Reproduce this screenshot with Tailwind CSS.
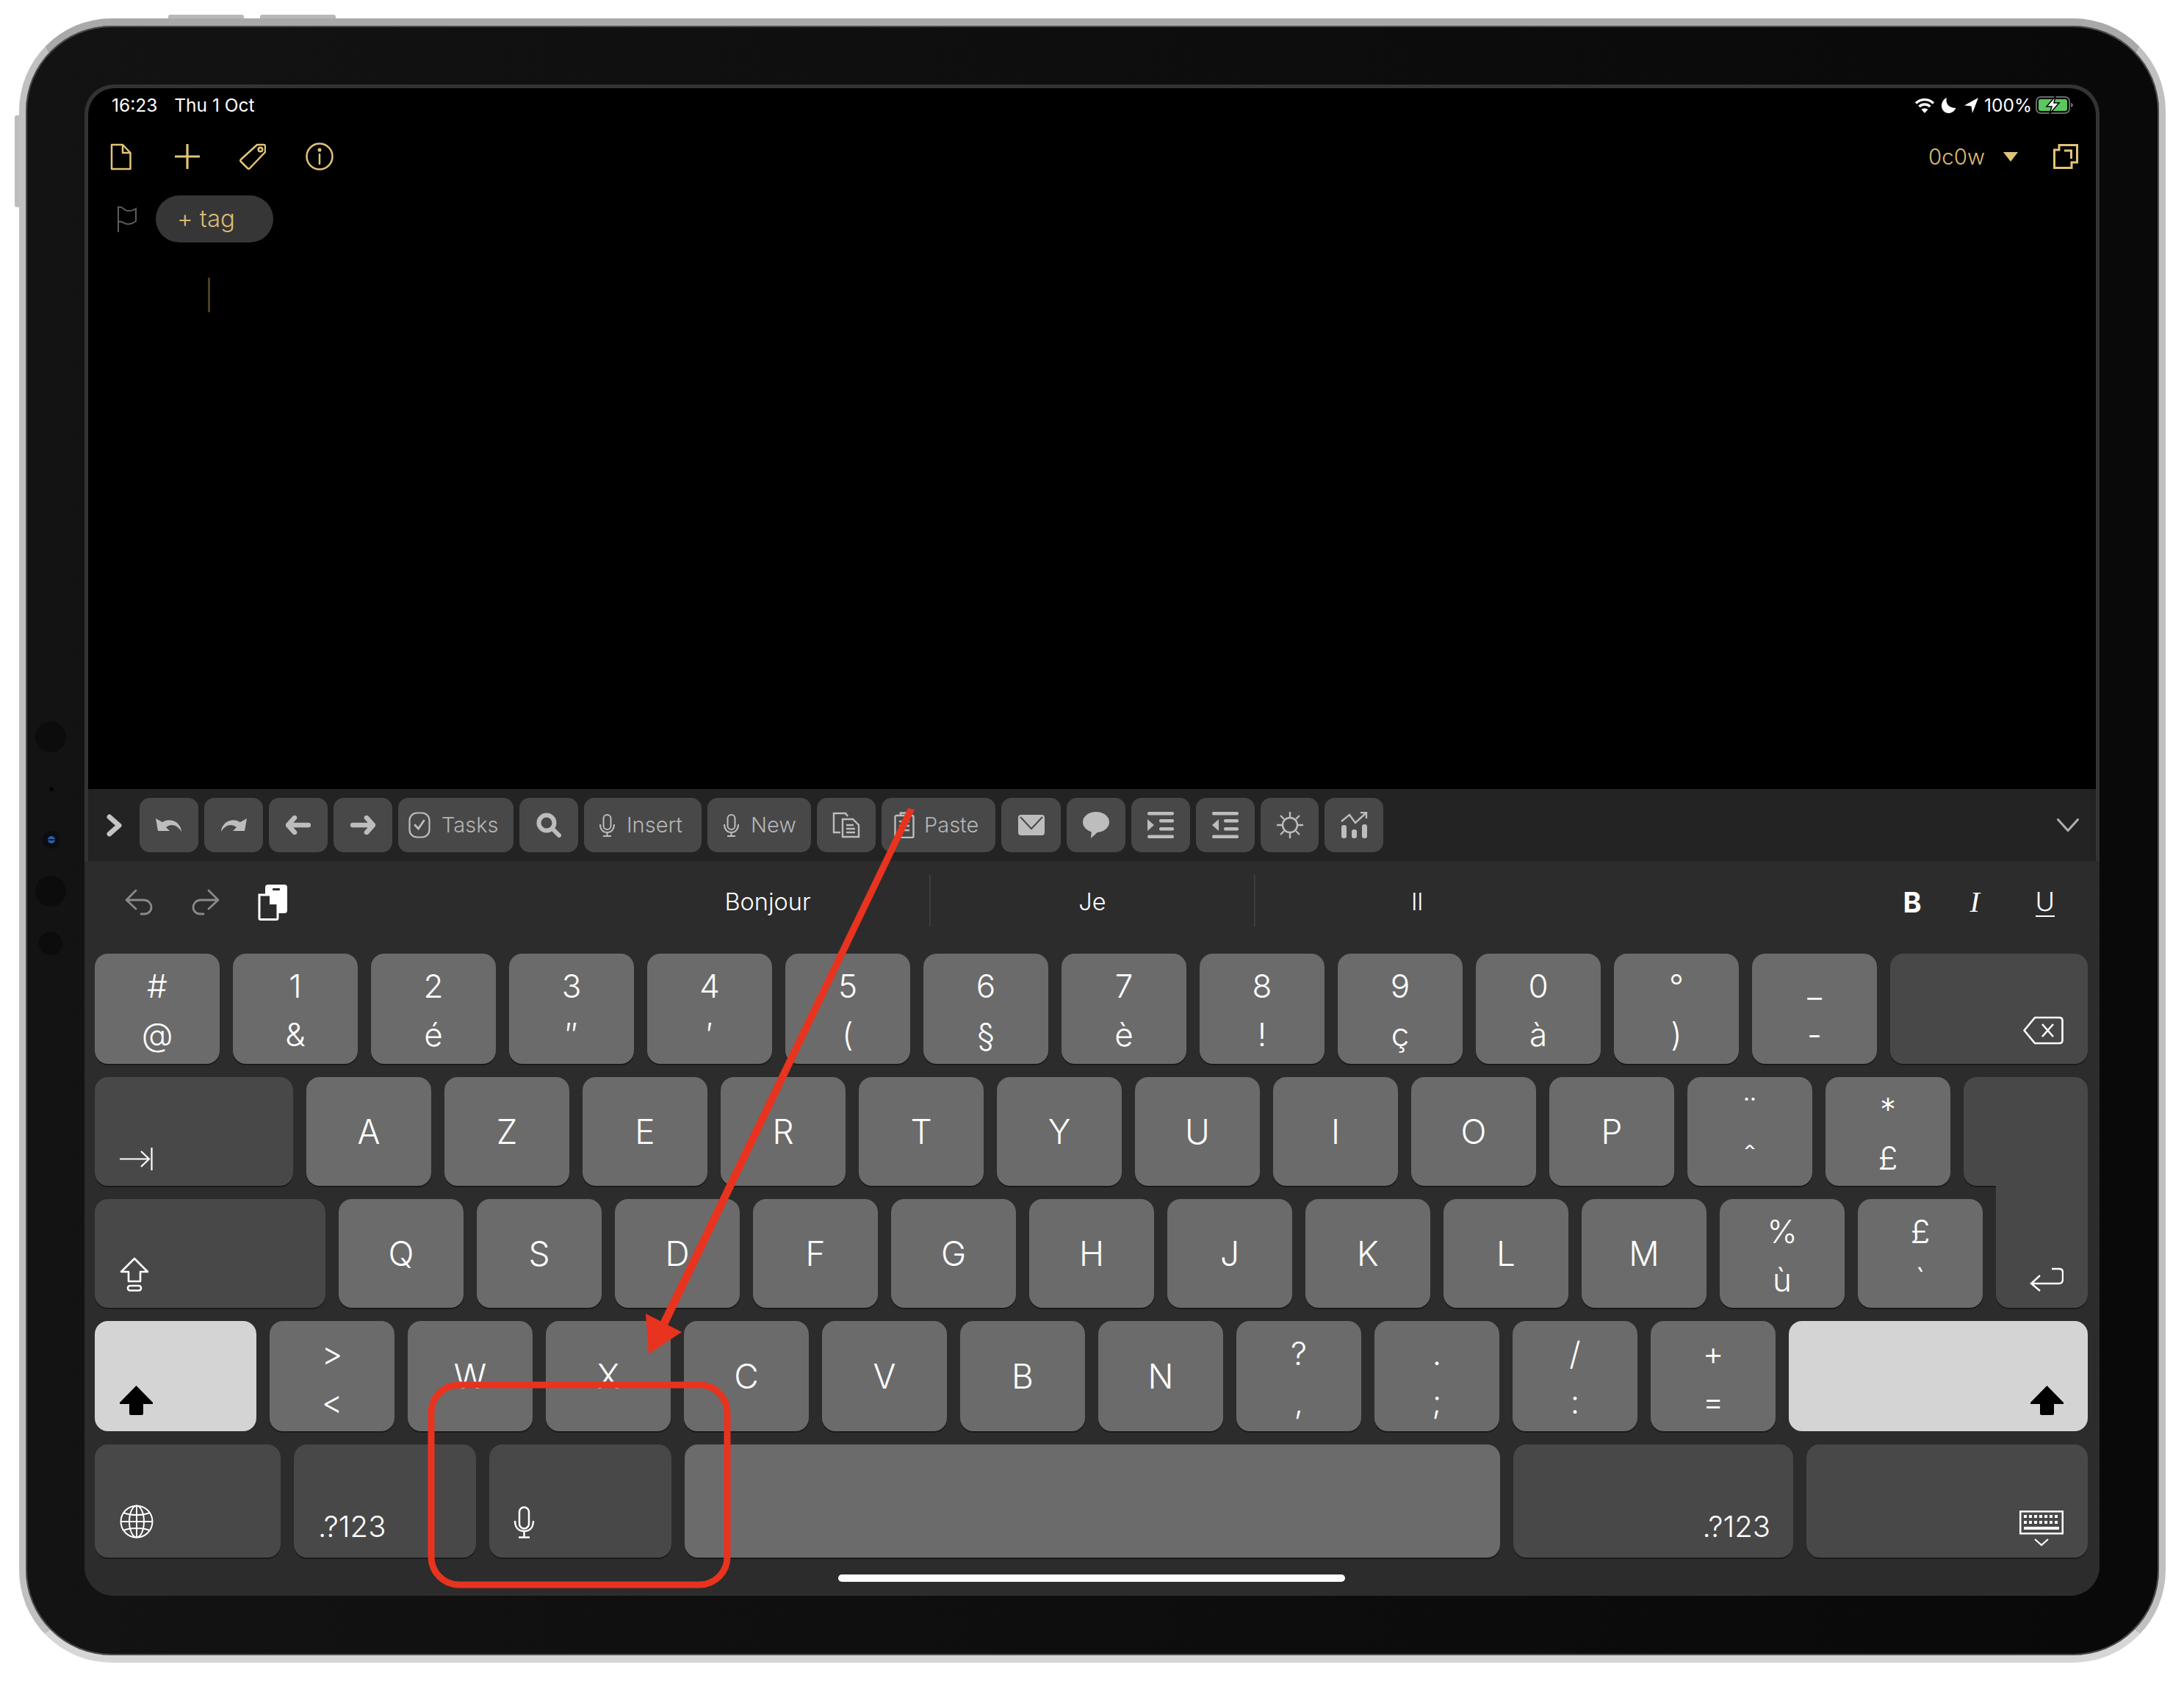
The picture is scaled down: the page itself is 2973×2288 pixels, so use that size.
<!DOCTYPE html>
<html lang="en">
<head>
  <meta charset="UTF-8" />
  <title>iPad keyboard</title>
  <script src="https://cdn.jsdelivr.net/npm/@tailwindcss/browser@4"></script>
</head>
<body class="bg-white font-['Inter',sans-serif] text-white">
<div class="relative w-[2973px] h-[2288px] overflow-hidden pt-[25px] pl-[26px]">

  <!-- DEVICE -->
  <div class="relative w-[2922px] h-[2238px] rounded-[126px] border-x-[9px] border-y-[10px] border-t-[#a9a9a9] border-x-[#c0c0c0] border-b-[#d6d6d6] bg-linear-to-r from-[#131313] to-[#090909] p-[80px] shadow-[inset_0_0_0_2px_#4a4a4a]">
    <!-- side buttons -->
    <div class="absolute left-[194px] -top-[15px] w-[103px] h-[5px] rounded-t-[3px] bg-[#b8b8b8]"></div>
    <div class="absolute left-[319px] -top-[15px] w-[103px] h-[5px] rounded-t-[3px] bg-[#b8b8b8]"></div>
    <div class="absolute -left-[15px] top-[122px] w-[6px] h-[125px] rounded-l-[3px] bg-[#bcbcbc]"></div>
    <!-- camera bar -->
    <div class="absolute left-[13px] top-[947px] w-[42px] h-[42px] rounded-full bg-[#0c0c0c]"></div>
    <div class="absolute left-[32px] top-[1036px] w-[6px] h-[6px] rounded-full bg-[#050505]"></div>
    <div class="absolute left-[23px] top-[1096px] w-[24px] h-[24px] rounded-full bg-[#0b0d12] p-[7px]"><div class="h-[10px] w-[10px] rounded-full border-y-[4px] border-[#2f5ea8] bg-[#101828]"></div></div>
    <div class="absolute left-[13px] top-[1157px] w-[42px] h-[42px] rounded-full bg-[#0c0c0c]"></div>
    <div class="absolute left-[18px] top-[1233px] w-[32px] h-[32px] rounded-full bg-[#0c0c0c]"></div>

    <!-- SCREEN -->
    <div class="w-[2743px] h-[2057px] rounded-[40px] overflow-hidden bg-[#333333] pt-[5px] flex flex-col">

      <!-- NOTE AREA -->
      <div class="mx-[5px] h-[954px] shrink-0 rounded-t-[36px] bg-black">
        <div class="flex h-[46px] items-center justify-between pl-[32px] pr-[30px] text-[24.500px]">
          <div class="flex gap-[23px]"><span>16:23</span><span>Thu 1 Oct</span></div>
          <div class="flex items-center">
            <svg class="w-[28px] h-[21px]" viewBox="0 0 28 21" fill="none" stroke="#fff" stroke-width="3.4"><path d="M2 7.500C9 1 19 1 26 7.500"/><path d="M6.500 12C11 8 17 8 21.500 12"/><path d="M14 21l-4.500-5c2.600-2 6.400-2 9 0z" fill="#fff" stroke="none"/></svg>
            <svg class="ml-[9px] w-[20px] h-[21px]" viewBox="0 0 20 21" fill="#fff"><path d="M7 0C5 7 9 14 19.500 14 17.500 18.500 13.500 21 9.500 21 4 21 0 16.500 0 11 0 6 3 1.500 7 0z"/></svg>
            <svg class="ml-[11px] w-[19px] h-[21px]" viewBox="0 0 19 21" fill="#fff"><path d="M19 0L11 21 9.500 11.500 0 10.500z"/></svg>
            <span class="ml-[8px]">100%</span>
            <svg class="ml-[5px] w-[52px] h-[26px]" viewBox="0 0 52 26" fill="none"><rect x="1" y="2" width="45" height="22" rx="6" stroke="#6a6a6a" stroke-width="2"/><rect x="4" y="5" width="39" height="16" rx="3" fill="#5ac85c"/><path d="M48 10c2 .5 3 2 3 3s-1 2.500-3 3z" fill="#6a6a6a"/><path d="M27 1L15 15h7l-3 10 13-15h-7z" fill="#fff" stroke="#000" stroke-width="1.500"/></svg>
          </div>
        </div>
        <div class="mt-[24px] flex h-[46px] items-center pl-[30px] pr-[24px]">
          <svg class="w-[29px] h-[37px]" viewBox="0 0 29 37" fill="none" stroke="#e2c477" stroke-width="2.500" stroke-linejoin="round"><path d="M2 2H17L27.500 13V35H2z"/><path d="M17 2V13H27.500"/></svg>
          <svg class="ml-[59px] w-[34px] h-[34px]" viewBox="0 0 34 34" fill="none" stroke="#e2c477" stroke-width="3.200" stroke-linecap="round"><path d="M17 1V33M1 17H33"/></svg>
          <svg class="ml-[54px] w-[36px] h-[36px]" viewBox="0 0 36 36" fill="none" stroke="#e2c477" stroke-width="2.500" stroke-linejoin="round"><path d="M24 2L33 2Q35 2 35 4L35 12L14 34Q12.500 35.500 11 34L2 25Q.5 23.500 2 22Z"/><circle cx="28.500" cy="8.500" r="2.800"/></svg>
          <svg class="ml-[54px] w-[38px] h-[38px]" viewBox="0 0 38 38" fill="none" stroke="#e2c477" stroke-width="2.500"><circle cx="19" cy="19" r="17.500"/><path d="M19 16V29" stroke-linecap="round"/><circle cx="19" cy="10" r="1.300" fill="#e2c477"/></svg>
          <span class="ml-auto text-[#dcbc70] text-[29.500px] font-light">0c0w</span>
          <svg class="ml-[25px] w-[20px] h-[13px]" viewBox="0 0 20 13" fill="#e2c477"><path d="M0 0H20L10 13z"/></svg>
          <svg class="ml-[48px] w-[34px] h-[34px]" viewBox="0 0 34 34" fill="none" stroke="#e2c477" stroke-width="3"><path d="M1.500 8H8V1.500H32.500V25H25V32.500H1.500z"/><path d="M15 9H24.500V20"/></svg>
        </div>
        <div class="mt-[30px] flex h-[64px] items-center pl-[39px]">
          <svg class="w-[27px] h-[38px]" viewBox="0 0 27 38" fill="none" stroke="#5c5c5c" stroke-width="2"><path d="M2 2V37M2 3C9 1 9 8 15 8 19 8 23 7 26 5V22C22 25 19 26 15 26 9 26 8 21 2 23"/></svg>
          <div class="ml-[26px] flex h-[64px] w-[160px] items-center rounded-full bg-[#363636] pl-[29px] text-[33px] font-light text-[#d8bc77]">+ tag</div>
        </div>
        <div class="ml-[163px] mt-[48px] h-[47px] w-[3px] bg-[#4a3f22]"></div>
      </div>

      <!-- SHORTCUT TOOLBAR -->
      <div class="mx-[5px] flex h-[98px] shrink-0 items-center gap-[8px] bg-[#232323] pl-[25px] text-[29px] font-light text-[#b4b4b4]">
        <svg class="mr-[16px] w-[21px] h-[31px]" viewBox="0 0 21 31" fill="none" stroke="#c4c4c4" stroke-width="7" stroke-linecap="round" stroke-linejoin="round"><path d="M4 4L17 15.500 4 27"/></svg>
        <div class="flex h-[74px] w-[80px] items-center justify-center rounded-[14px] bg-[#484848]"><svg class="w-[36px] h-[18px]" viewBox="0 0 36 18" fill="#bdbdbd"><path d="M0 0L3 17H19L14 12C21 6 30 9 35 18 35 9 24-3 9 5z"/></svg></div>
        <div class="flex h-[74px] w-[80px] items-center justify-center rounded-[14px] bg-[#484848]"><svg class="w-[36px] h-[18px]" viewBox="0 0 36 18" fill="#bdbdbd"><path d="M36 0L33 17H17L22 12C15 6 6 9 1 18 1 9 12-3 27 5z"/></svg></div>
        <div class="flex h-[74px] w-[80px] items-center justify-center rounded-[14px] bg-[#484848]"><svg class="w-[34px] h-[26px]" viewBox="0 0 34 26" fill="none" stroke="#bdbdbd" stroke-width="6.500" stroke-linecap="round" stroke-linejoin="round"><path d="M12 3L3 13 12 23M4 13H31"/></svg></div>
        <div class="flex h-[74px] w-[80px] items-center justify-center rounded-[14px] bg-[#484848]"><svg class="w-[34px] h-[26px]" viewBox="0 0 34 26" fill="none" stroke="#bdbdbd" stroke-width="6.500" stroke-linecap="round" stroke-linejoin="round"><path d="M22 3L31 13 22 23M30 13H3"/></svg></div>
        <div class="flex h-[74px] w-[157px] items-center rounded-[14px] bg-[#484848] pl-[14px]">
          <svg class="w-[30px] h-[36px]" viewBox="0 0 30 36" fill="none" stroke="#bdbdbd" stroke-width="2.200"><rect x="1.500" y="1.500" width="27" height="33" rx="10"/><path d="M9 18L13.500 23 21 12" stroke-width="2.800" stroke-linecap="round"/></svg>
          <span class="ml-[15px]">Tasks</span>
        </div>
        <div class="flex h-[74px] w-[80px] items-center justify-center rounded-[14px] bg-[#484848]"><svg class="w-[34px] h-[34px]" viewBox="0 0 34 34" fill="none" stroke="#bdbdbd" stroke-width="6" stroke-linecap="round"><circle cx="14" cy="14" r="10.500"/><path d="M22 22L31 31"/></svg></div>
        <div class="flex h-[74px] w-[160px] items-center rounded-[14px] bg-[#484848] pl-[20px]">
          <svg class="w-[23px] h-[31px]" viewBox="0 0 23 31" fill="none" stroke="#bdbdbd" stroke-width="2"><rect x="6.500" y="1" width="10" height="20" rx="5"/><path d="M2 14C2 21 6 25 11.500 25S21 21 21 14M11.500 25V30M6 30H17"/></svg>
          <span class="ml-[15px]">Insert</span>
        </div>
        <div class="flex h-[74px] w-[141px] items-center rounded-[14px] bg-[#484848] pl-[21px]">
          <svg class="w-[23px] h-[31px]" viewBox="0 0 23 31" fill="none" stroke="#bdbdbd" stroke-width="2"><rect x="6.500" y="1" width="10" height="20" rx="5"/><path d="M2 14C2 21 6 25 11.500 25S21 21 21 14M11.500 25V30M6 30H17"/></svg>
          <span class="ml-[15px]">New</span>
        </div>
        <div class="flex h-[74px] w-[80px] items-center justify-center rounded-[14px] bg-[#484848]"><svg class="w-[38px] h-[36px]" viewBox="0 0 38 36" fill="none" stroke="#bdbdbd" stroke-width="2.400"><path d="M11 28H2V2H18L21 6"/><path d="M14 10H28L36 18V34H14z" fill="#484848"/><path d="M19 18H29M19 23H31M19 28H31" stroke-width="2.500"/></svg></div>
        <div class="flex h-[74px] w-[155px] items-center rounded-[14px] bg-[#484848] pl-[17px]">
          <svg class="w-[28px] h-[36px]" viewBox="0 0 28 36" fill="none" stroke="#bdbdbd" stroke-width="2.400"><rect x="1.500" y="5" width="25" height="30" rx="2"/><path d="M9 5V1.500H19V5M7 13H21M7 19H21M7 25H21" stroke-width="2.600"/></svg>
          <span class="ml-[13px]">Paste</span>
        </div>
        <div class="flex h-[74px] w-[81px] items-center justify-center rounded-[14px] bg-[#484848]"><svg class="w-[36px] h-[28px]" viewBox="0 0 36 28" fill="#bdbdbd"><rect width="36" height="28" rx="4"/><path d="M3 3L18 19 33 3" fill="none" stroke="#484848" stroke-width="2"/></svg></div>
        <div class="flex h-[74px] w-[80px] items-center justify-center rounded-[14px] bg-[#484848]"><svg class="w-[36px] h-[36px]" viewBox="0 0 36 36" fill="#bdbdbd"><ellipse cx="18" cy="14" rx="18" ry="14"/><path d="M12 24L11 36 24 24z"/></svg></div>
        <div class="flex h-[74px] w-[80px] items-center justify-center rounded-[14px] bg-[#484848]"><svg class="w-[36px] h-[36px]" viewBox="0 0 36 36" fill="#bdbdbd"><rect width="36" height="4.500" rx="2"/><rect y="31.500" width="36" height="4.500" rx="2"/><rect x="16" y="10" width="20" height="4.500" rx="2"/><rect x="16" y="21" width="20" height="4.500" rx="2"/><path d="M0 10L9 18 0 26z"/></svg></div>
        <div class="flex h-[74px] w-[80px] items-center justify-center rounded-[14px] bg-[#484848]"><svg class="w-[36px] h-[36px]" viewBox="0 0 36 36" fill="#bdbdbd"><rect width="36" height="4.500" rx="2"/><rect y="31.500" width="36" height="4.500" rx="2"/><rect x="16" y="10" width="20" height="4.500" rx="2"/><rect x="16" y="21" width="20" height="4.500" rx="2"/><path d="M9 10L0 18 9 26z"/></svg></div>
        <div class="flex h-[74px] w-[79px] items-center justify-center rounded-[14px] bg-[#484848]"><svg class="w-[36px] h-[36px]" viewBox="0 0 36 36" fill="none" stroke="#bdbdbd" stroke-width="2.400"><circle cx="18" cy="18" r="10"/><path d="M18 0V7M18 29V36M0 18H7M29 18H36M5 5L10 10M26 26L31 31M31 5L26 10M10 26L5 31"/></svg></div>
        <div class="flex h-[74px] w-[80px] items-center justify-center rounded-[14px] bg-[#484848]"><svg class="w-[37px] h-[36px]" viewBox="0 0 37 36" fill="none" stroke="#bdbdbd"><path d="M1 13L12 4 20 15 34 2M27 1H35V9" stroke-width="2.400"/><rect x="1" y="18" width="7" height="18" rx="3" fill="#bdbdbd" stroke="none"/><rect x="15" y="24" width="7" height="12" rx="3" fill="#bdbdbd" stroke="none"/><rect x="29" y="17" width="7" height="19" rx="3" fill="#bdbdbd" stroke="none"/></svg></div>
        <svg class="ml-auto mr-[23px] w-[30px] h-[18px]" viewBox="0 0 30 18" fill="none" stroke="#b0b0b0" stroke-width="3" stroke-linecap="round"><path d="M1.500 1.500L15 16.500 28.500 1.500"/></svg>
      </div>

      <!-- KEYBOARD -->
      <div class="flex-1 bg-[#2c2c2c] pl-[14px] pr-[16px]">
        <!-- suggestion bar -->
        <div class="relative flex h-[126px] items-center pb-[14px] pl-[41px]">
          <svg class="w-[38px] h-[36px]" viewBox="0 0 38 36" fill="none" stroke="#8a8a8a" stroke-width="2.800" stroke-linecap="round" stroke-linejoin="round"><path d="M15 2L2 15 15 27M2 15H26C32 15 36 20 36 25S32 34 26 34H22"/></svg>
          <svg class="ml-[53px] w-[38px] h-[36px]" viewBox="0 0 38 36" fill="none" stroke="#8a8a8a" stroke-width="2.800" stroke-linecap="round" stroke-linejoin="round"><path d="M23 2L36 15 23 27M36 15H12C6 15 2 20 2 25S6 34 12 34H16"/></svg>
          <svg class="ml-[52px] w-[41px] h-[49px]" viewBox="0 0 41 49" fill="none"><rect x="10" y="0" width="30" height="39" rx="4" fill="#fff"/><rect x="20" y="5" width="10" height="3" rx="1" fill="#2c2c2c"/><path d="M2 14H17L27 26V46Q27 47.500 25 47.500H4Q2 47.500 2 46z" fill="#2c2c2c" stroke="#fff" stroke-width="3"/><path d="M16 14L27 27H16z" fill="#fff"/></svg>
          <span class="absolute left-[916px] top-[33px] w-[260px] -translate-x-1/2 text-center text-[32.500px] font-light leading-[46px]">Bonjour</span>
          <div class="absolute left-[1136px] top-[19px] h-[70px] w-[2px] bg-[#3d3d3d]"></div>
          <span class="absolute left-[1358px] top-[33px] w-[100px] -translate-x-1/2 text-center text-[32.500px] font-light leading-[46px]">Je</span>
          <div class="absolute left-[1578px] top-[19px] h-[70px] w-[2px] bg-[#3d3d3d]"></div>
          <span class="absolute left-[1800px] top-[33px] w-[100px] -translate-x-1/2 text-center text-[32.500px] font-light leading-[46px]">Il</span>
          <div class="ml-auto flex items-center pr-[45px]">
            <span class="w-[26px] text-[38px] font-bold leading-[46px]">B</span>
            <span class="ml-[65px] w-[21px] font-['Liberation_Serif'] text-[40px] italic leading-[46px]">I</span>
            <span class="ml-[68px] border-b-2 border-white text-[36px] font-light leading-[38px]">U</span>
          </div>
        </div>

        <div class="flex flex-col gap-[18px]">
          <!-- row 1 -->
          <div class="flex h-[150px] gap-[18px] text-[44px] font-light leading-[66px]">
            <div class="w-[170px] rounded-[18px] bg-[#6b6b6b] pt-[11px] text-center shadow-[0_2px_0_#1b1b1b]"><p>#</p><p>@</p></div>
            <div class="w-[170px] rounded-[18px] bg-[#6b6b6b] pt-[11px] text-center shadow-[0_2px_0_#1b1b1b]"><p>1</p><p>&amp;</p></div>
            <div class="w-[170px] rounded-[18px] bg-[#6b6b6b] pt-[11px] text-center shadow-[0_2px_0_#1b1b1b]"><p>2</p><p>é</p></div>
            <div class="w-[170px] rounded-[18px] bg-[#6b6b6b] pt-[11px] text-center shadow-[0_2px_0_#1b1b1b]"><p>3</p><p>″</p></div>
            <div class="w-[170px] rounded-[18px] bg-[#6b6b6b] pt-[11px] text-center shadow-[0_2px_0_#1b1b1b]"><p>4</p><p>′</p></div>
            <div class="w-[170px] rounded-[18px] bg-[#6b6b6b] pt-[11px] text-center shadow-[0_2px_0_#1b1b1b]"><p>5</p><p>(</p></div>
            <div class="w-[170px] rounded-[18px] bg-[#6b6b6b] pt-[11px] text-center shadow-[0_2px_0_#1b1b1b]"><p>6</p><p>§</p></div>
            <div class="w-[170px] rounded-[18px] bg-[#6b6b6b] pt-[11px] text-center shadow-[0_2px_0_#1b1b1b]"><p>7</p><p>è</p></div>
            <div class="w-[170px] rounded-[18px] bg-[#6b6b6b] pt-[11px] text-center shadow-[0_2px_0_#1b1b1b]"><p>8</p><p>!</p></div>
            <div class="w-[170px] rounded-[18px] bg-[#6b6b6b] pt-[11px] text-center shadow-[0_2px_0_#1b1b1b]"><p>9</p><p>ç</p></div>
            <div class="w-[170px] rounded-[18px] bg-[#6b6b6b] pt-[11px] text-center shadow-[0_2px_0_#1b1b1b]"><p>0</p><p>à</p></div>
            <div class="w-[170px] rounded-[18px] bg-[#6b6b6b] pt-[11px] text-center shadow-[0_2px_0_#1b1b1b]"><p>°</p><p>)</p></div>
            <div class="w-[170px] rounded-[18px] bg-[#6b6b6b] pt-[11px] text-center shadow-[0_2px_0_#1b1b1b]"><p>_</p><p>-</p></div>
            <div class="flex w-[269px] items-end justify-end rounded-[18px] bg-[#484848] pb-[26px] pr-[33px] shadow-[0_2px_0_#1b1b1b]">
              <svg class="w-[55px] h-[39px]" viewBox="0 0 55 39" fill="none" stroke="#fff" stroke-width="2.600" stroke-linejoin="round"><path d="M1.500 19.500L16 2H49Q53.500 2 53.500 6V33Q53.500 37 49 37H16z"/><path d="M26 11L41 28M41 11L26 28"/></svg>
            </div>
          </div>

          <!-- row 2 -->
          <div class="flex h-[148px] gap-[18px] text-[46px] font-light">
            <div class="flex w-[270px] items-end rounded-[18px] bg-[#484848] pb-[21px] pl-[34px] shadow-[0_2px_0_#1b1b1b]">
              <svg class="w-[45px] h-[31px]" viewBox="0 0 45 31" fill="none" stroke="#fff" stroke-width="2.200"><path d="M0 15.500H40M29 5L40 15.500 29 26"/><path d="M43.500 0V31"/></svg>
            </div>
            <div class="flex w-[170px] items-center justify-center rounded-[18px] bg-[#6b6b6b] shadow-[0_2px_0_#1b1b1b]">A</div>
            <div class="flex w-[170px] items-center justify-center rounded-[18px] bg-[#6b6b6b] shadow-[0_2px_0_#1b1b1b]">Z</div>
            <div class="flex w-[170px] items-center justify-center rounded-[18px] bg-[#6b6b6b] shadow-[0_2px_0_#1b1b1b]">E</div>
            <div class="flex w-[170px] items-center justify-center rounded-[18px] bg-[#6b6b6b] shadow-[0_2px_0_#1b1b1b]">R</div>
            <div class="flex w-[170px] items-center justify-center rounded-[18px] bg-[#6b6b6b] shadow-[0_2px_0_#1b1b1b]">T</div>
            <div class="flex w-[170px] items-center justify-center rounded-[18px] bg-[#6b6b6b] shadow-[0_2px_0_#1b1b1b]">Y</div>
            <div class="flex w-[170px] items-center justify-center rounded-[18px] bg-[#6b6b6b] shadow-[0_2px_0_#1b1b1b]">U</div>
            <div class="flex w-[170px] items-center justify-center rounded-[18px] bg-[#6b6b6b] shadow-[0_2px_0_#1b1b1b]">I</div>
            <div class="flex w-[170px] items-center justify-center rounded-[18px] bg-[#6b6b6b] shadow-[0_2px_0_#1b1b1b]">O</div>
            <div class="flex w-[170px] items-center justify-center rounded-[18px] bg-[#6b6b6b] shadow-[0_2px_0_#1b1b1b]">P</div>
            <div class="w-[170px] rounded-[18px] bg-[#6b6b6b] pt-[11px] text-center text-[44px] leading-[66px] shadow-[0_2px_0_#1b1b1b]"><p>¨</p><p>ˆ</p></div>
            <div class="w-[170px] rounded-[18px] bg-[#6b6b6b] pt-[11px] text-center text-[44px] leading-[66px] shadow-[0_2px_0_#1b1b1b]"><p>*</p><p>£</p></div>
            <div class="w-[169px] rounded-t-[18px] rounded-bl-[18px] bg-[#484848] shadow-[0_2px_0_#1b1b1b]"></div>
          </div>

          <!-- row 3 -->
          <div class="flex h-[148px] gap-[18px] text-[46px] font-light">
            <div class="flex w-[314px] items-end rounded-[18px] bg-[#484848] pb-[22px] pl-[34px] shadow-[0_2px_0_#1b1b1b]">
              <svg class="w-[40px] h-[47px]" viewBox="0 0 40 47" fill="none" stroke="#fff" stroke-width="2.600" stroke-linejoin="round"><path d="M20 2L38 20H28V33H12V20H2z"/><rect x="11" y="39" width="18" height="6.500" rx="3"/></svg>
            </div>
            <div class="flex w-[170px] items-center justify-center rounded-[18px] bg-[#6b6b6b] shadow-[0_2px_0_#1b1b1b]">Q</div>
            <div class="flex w-[170px] items-center justify-center rounded-[18px] bg-[#6b6b6b] shadow-[0_2px_0_#1b1b1b]">S</div>
            <div class="flex w-[170px] items-center justify-center rounded-[18px] bg-[#6b6b6b] shadow-[0_2px_0_#1b1b1b]">D</div>
            <div class="flex w-[170px] items-center justify-center rounded-[18px] bg-[#6b6b6b] shadow-[0_2px_0_#1b1b1b]">F</div>
            <div class="flex w-[170px] items-center justify-center rounded-[18px] bg-[#6b6b6b] shadow-[0_2px_0_#1b1b1b]">G</div>
            <div class="flex w-[170px] items-center justify-center rounded-[18px] bg-[#6b6b6b] shadow-[0_2px_0_#1b1b1b]">H</div>
            <div class="flex w-[170px] items-center justify-center rounded-[18px] bg-[#6b6b6b] shadow-[0_2px_0_#1b1b1b]">J</div>
            <div class="flex w-[170px] items-center justify-center rounded-[18px] bg-[#6b6b6b] shadow-[0_2px_0_#1b1b1b]">K</div>
            <div class="flex w-[170px] items-center justify-center rounded-[18px] bg-[#6b6b6b] shadow-[0_2px_0_#1b1b1b]">L</div>
            <div class="flex w-[170px] items-center justify-center rounded-[18px] bg-[#6b6b6b] shadow-[0_2px_0_#1b1b1b]">M</div>
            <div class="w-[170px] rounded-[18px] bg-[#6b6b6b] pt-[11px] text-center text-[44px] leading-[66px] shadow-[0_2px_0_#1b1b1b]"><p>%</p><p>ù</p></div>
            <div class="w-[170px] rounded-[18px] bg-[#6b6b6b] pt-[11px] text-center text-[44px] leading-[66px] shadow-[0_2px_0_#1b1b1b]"><p>£</p><p>`</p></div>
            <div class="-mt-[20px] flex h-[168px] w-[125px] items-end justify-end rounded-b-[18px] bg-[#484848] pb-[22px] pr-[33px] shadow-[0_2px_0_#1b1b1b]">
              <svg class="w-[46px] h-[33px]" viewBox="0 0 46 33" fill="none" stroke="#fff" stroke-width="2.400"><path d="M30 2H40Q45 2 45 7V16Q45 22 40 22H2M14 11L2 22 14 32"/></svg>
            </div>
          </div>

          <!-- row 4 -->
          <div class="flex h-[150px] gap-[18px] text-[46px] font-light">
            <div class="flex w-[220px] items-end rounded-[18px] bg-[#d4d4d4] pb-[22px] pl-[34px]">
              <svg class="w-[45px] h-[40px]" viewBox="0 0 45 40" fill="#000"><path d="M22.500 0L45 23V25H32V38Q32 40 30 40H15Q13 40 13 38V25H0V23z"/></svg>
            </div>
            <div class="w-[170px] rounded-[18px] bg-[#6b6b6b] pt-[11px] text-center text-[44px] leading-[66px] shadow-[0_2px_0_#1b1b1b]"><p>&gt;</p><p>&lt;</p></div>
            <div class="flex w-[170px] items-center justify-center rounded-[18px] bg-[#6b6b6b] shadow-[0_2px_0_#1b1b1b]">W</div>
            <div class="flex w-[170px] items-center justify-center rounded-[18px] bg-[#6b6b6b] shadow-[0_2px_0_#1b1b1b]">X</div>
            <div class="flex w-[170px] items-center justify-center rounded-[18px] bg-[#6b6b6b] shadow-[0_2px_0_#1b1b1b]">C</div>
            <div class="flex w-[170px] items-center justify-center rounded-[18px] bg-[#6b6b6b] shadow-[0_2px_0_#1b1b1b]">V</div>
            <div class="flex w-[170px] items-center justify-center rounded-[18px] bg-[#6b6b6b] shadow-[0_2px_0_#1b1b1b]">B</div>
            <div class="flex w-[170px] items-center justify-center rounded-[18px] bg-[#6b6b6b] shadow-[0_2px_0_#1b1b1b]">N</div>
            <div class="w-[170px] rounded-[18px] bg-[#6b6b6b] pt-[11px] text-center text-[44px] leading-[66px] shadow-[0_2px_0_#1b1b1b]"><p>?</p><p>,</p></div>
            <div class="w-[170px] rounded-[18px] bg-[#6b6b6b] pt-[11px] text-center text-[44px] leading-[66px] shadow-[0_2px_0_#1b1b1b]"><p>.</p><p>;</p></div>
            <div class="w-[170px] rounded-[18px] bg-[#6b6b6b] pt-[11px] text-center text-[44px] leading-[66px] shadow-[0_2px_0_#1b1b1b]"><p>/</p><p>:</p></div>
            <div class="w-[170px] rounded-[18px] bg-[#6b6b6b] pt-[11px] text-center text-[44px] leading-[66px] shadow-[0_2px_0_#1b1b1b]"><p>+</p><p>=</p></div>
            <div class="flex w-[407px] items-end justify-end rounded-[18px] bg-[#d4d4d4] pb-[22px] pr-[33px]">
              <svg class="w-[45px] h-[40px]" viewBox="0 0 45 40" fill="#000"><path d="M22.500 0L45 23V25H32V38Q32 40 30 40H15Q13 40 13 38V25H0V23z"/></svg>
            </div>
          </div>

          <!-- row 5 -->
          <div class="flex h-[154px] gap-[18px] text-[40px] font-light">
            <div class="flex w-[253px] items-end rounded-[18px] bg-[#484848] pb-[26px] pl-[34px] shadow-[0_2px_0_#1b1b1b]">
              <svg class="w-[46px] h-[46px]" viewBox="0 0 46 46" fill="none" stroke="#fff" stroke-width="2"><circle cx="23" cy="23" r="21.500"/><ellipse cx="23" cy="23" rx="10" ry="21.500"/><path d="M23 1.500V44.500M1.500 23H44.500M5 11C15 15 31 15 41 11M5 35C15 31 31 31 41 35"/></svg>
            </div>
            <div class="flex w-[248px] items-end rounded-[18px] bg-[#484848] pb-[12px] pl-[33px] shadow-[0_2px_0_#1b1b1b]">.?123</div>
            <div class="flex w-[248px] items-end rounded-[18px] bg-[#484848] pb-[26px] pl-[33px] shadow-[0_2px_0_#1b1b1b]">
              <svg class="w-[29px] h-[44px]" viewBox="0 0 29 44" fill="none" stroke="#fff" stroke-width="2.500"><rect x="8" y="1.500" width="13" height="29" rx="6.500"/><path d="M2 20C2 29 7 34 14.500 34S27 29 27 20M14.500 34V42M7 42.500H22"/></svg>
            </div>
            <div class="w-[1110px] rounded-[18px] bg-[#6b6b6b] shadow-[0_2px_0_#1b1b1b]"></div>
            <div class="flex w-[381px] items-end justify-end rounded-[18px] bg-[#484848] pb-[12px] pr-[31px] shadow-[0_2px_0_#1b1b1b]">.?123</div>
            <div class="flex w-[383px] items-end justify-end rounded-[18px] bg-[#484848] pb-[14px] pr-[33px] shadow-[0_2px_0_#1b1b1b]">
              <svg class="w-[60px] h-[50px]" viewBox="0 0 60 50" fill="none" stroke="#fff"><rect x="1.250" y="1.250" width="57.500" height="30" stroke-width="2.500"/><path d="M6 8H54M6 16H54" stroke-width="4" stroke-dasharray="4 3"/><path d="M6 24H54" stroke-width="4"/><path d="M21 39L30 47 39 39" stroke-width="2.200"/></svg>
            </div>
          </div>
        </div>

        <div class="mx-auto mt-[23px] h-[10px] w-[690px] rounded-full bg-white"></div>
      </div>
    </div>
  </div>

  <!-- ANNOTATION -->
  <svg class="absolute left-0 top-0 w-[2973px] h-[2288px]" viewBox="0 0 2973 2288" fill="none">
    <path d="M1245 1102L1236 1100L896 1805L906 1810Z" fill="#e8331f"/>
    <path d="M879 1788L928 1813L883 1843Z" fill="#e8331f"/>
    <rect x="587" y="1885" width="403" height="272" rx="38" stroke="#e8331f" stroke-width="9"/>
  </svg>
</div>
</body>
</html>
